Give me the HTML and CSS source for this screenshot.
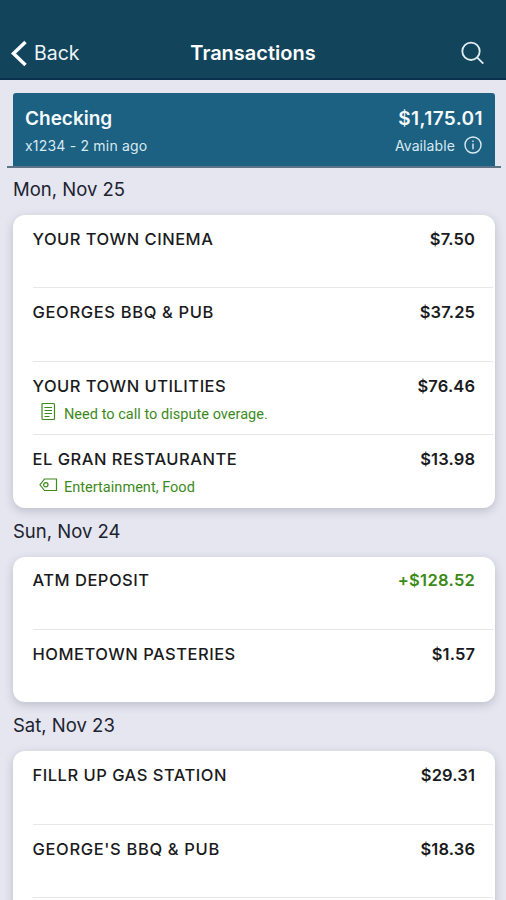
FILE: index.html
```html
<!DOCTYPE html>
<html lang="en">
<head>
<meta charset="utf-8">
<title>Transactions</title>
<link rel="stylesheet" href="styles.css">
</head>
<body>
<header class="navbar">
  <a class="back"><svg class="chevron" width="17" height="28" viewBox="0 0 17 28"><path d="M15.500 3 3.500 14.500l12 11.500"/></svg><span>Back</span></a>
  <h1 class="title">Transactions</h1>
  <svg class="search" width="24" height="24" viewBox="0 0 24 24"><circle cx="10" cy="10.300" r="8.700"/><path d="m16.300 16.700 6 6"/></svg>
</header>
<section class="account">
  <div class="account-line"><span>Checking</span><span class="account-balance">$1,175.01</span></div>
  <div class="account-line account-sub"><span class="account-number">x1234 - 2 min ago</span>
    <span class="available">Available <svg class="info" width="18" height="18" viewBox="0 0 18 18"><circle cx="9" cy="9" r="8"/><path d="M9 7.500v5.800M9 4.500v1.600"/></svg></span></div>
</section>
<main>
  <h2 class="day">Mon, Nov 25</h2>
  <ul class="card">
    <li class="row"><span class="name">YOUR TOWN CINEMA</span><span class="amount">$7.50</span></li>
    <li class="row"><span class="name wide">GEORGES BBQ &amp; PUB</span><span class="amount">$37.25</span></li>
    <li class="row"><span class="name">YOUR TOWN UTILITIES</span><span class="amount">$76.46</span>
      <p class="note"><svg class="note-icon" width="20" height="20" viewBox="0 0 20 20"><rect x="3" y="1.500" width="12.500" height="16" rx="1"/><path d="M5.500 5.500h7.500M5.500 8.500h7.500M5.500 11.500h7.500M5.500 14.500h5"/></svg><span class="note-text">Need to call to dispute overage.</span></p></li>
    <li class="row"><span class="name">EL GRAN RESTAURANTE</span><span class="amount">$13.98</span>
      <p class="note"><svg class="note-icon" width="20" height="20" viewBox="0 0 20 20"><path d="M5.500 4h12v11.500h-12L1 9.750z"/><circle cx="6.800" cy="9.750" r="2.200"/></svg><span class="note-text">Entertainment, Food</span></p></li>
  </ul>
  <h2 class="day">Sun, Nov 24</h2>
  <ul class="card short">
    <li class="row"><span class="name">ATM DEPOSIT</span><span class="amount credit">+$128.52</span></li>
    <li class="row"><span class="name">HOMETOWN PASTERIES</span><span class="amount">$1.57</span></li>
  </ul>
  <h2 class="day">Sat, Nov 23</h2>
  <ul class="card">
    <li class="row"><span class="name">FILLR UP GAS STATION</span><span class="amount">$29.31</span></li>
    <li class="row"><span class="name wide">GEORGE'S BBQ &amp; PUB</span><span class="amount">$18.36</span></li>
    <li class="row"></li>
  </ul>
</main>
</body>
</html>
```

FILE: styles.css
```css
* { box-sizing: border-box; }
html { overflow: hidden; }
body {
  margin: 0;
  height: 900px;
  overflow: hidden;
  background: #e5e6f0;
  color: #1a1b20;
  font-family: Inter, "Liberation Sans", sans-serif;
}
h1, h2, p, ul { margin: 0; padding: 0; }
svg { fill: none; stroke: currentColor; flex: none; }
.navbar {
  display: grid;
  grid-template-columns: 1fr auto 1fr;
  align-items: center;
  height: 80px;
  padding: 28px 10px 0;
  background: #12455b;
  border-bottom: 2px solid #0b3150;
  color: #fff;
}
.back { display: flex; align-items: center; gap: 7px; font-size: 19.500px; color: #edf5f8; }
.chevron { stroke: #fff; stroke-width: 3.5; }
.title { font-size: 20px; font-weight: 600; line-height: 24px; }
.search { justify-self: end; margin-right: 11px; stroke: #e3eef3; stroke-width: 1.8; }
.account {
  height: 73px;
  margin: 13px 11px 0 13px;
  padding: 13px 12px 0;
  background: #1c6082;
  border-radius: 3px 3px 0 0;
  color: #f5fafc;
}
.account::after {
  content: "";
  display: block;
  height: 2px;
  margin: 9px -18px 0;
  background: #5c7486;
}
.account-line { display: flex; justify-content: space-between; align-items: center; height: 24px; font-size: 19px; font-weight: 600; }
.account-balance { letter-spacing: .4px; }
.account-sub { height: 24px; margin-top: 3px; font-size: 14px; font-weight: 400; color: #d9e9f1; }
.account-number { letter-spacing: .2px; }
.available { display: flex; align-items: center; gap: 9px; margin-right: 1px; letter-spacing: .1px; }
.info { stroke-width: 1.4; }
.day { height: 49px; padding: 11px 13px 0; font-size: 18.500px; font-weight: 400; line-height: 24px; color: #20232f; }
.card {
  margin: 0 11px 0 13px;
  padding-right: 2px;
  background: #fff;
  border-radius: 12px;
  box-shadow: 0 3px 10px rgba(60, 62, 80, .24);
  list-style: none;
}
.row {
  display: grid;
  grid-template-columns: 1fr auto;
  align-content: start;
  height: 73.300px;
  margin-left: 20px;
  padding: 13px 18px 0 0;
  border-bottom: 1px solid #e6e7e9;
}
.row:last-child { border-bottom-color: transparent; }
.short .row { padding-top: 12px; }
.short .row:last-child { height: 72px; padding-top: 13px; }
.name, .amount { font-size: 16.500px; font-weight: 500; line-height: 22px; }
.name { margin-left: -.5px; letter-spacing: .5px; }
.wide { letter-spacing: .65px; }
.amount { font-weight: 600; letter-spacing: .15px; margin-right: -.15px; }
.credit { color: #3b8a16; letter-spacing: .3px; }
.note {
  grid-column: 1 / -1;
  display: flex;
  align-items: center;
  gap: 5px;
  height: 20px;
  margin: 5px 0 0 6px;
  color: #3c8a1b;
  font: 14.500px/20px Roboto, sans-serif;
}
.note-text { padding-top: 6px; letter-spacing: .03px; }
.note-icon { stroke-width: 1.2; }
```
